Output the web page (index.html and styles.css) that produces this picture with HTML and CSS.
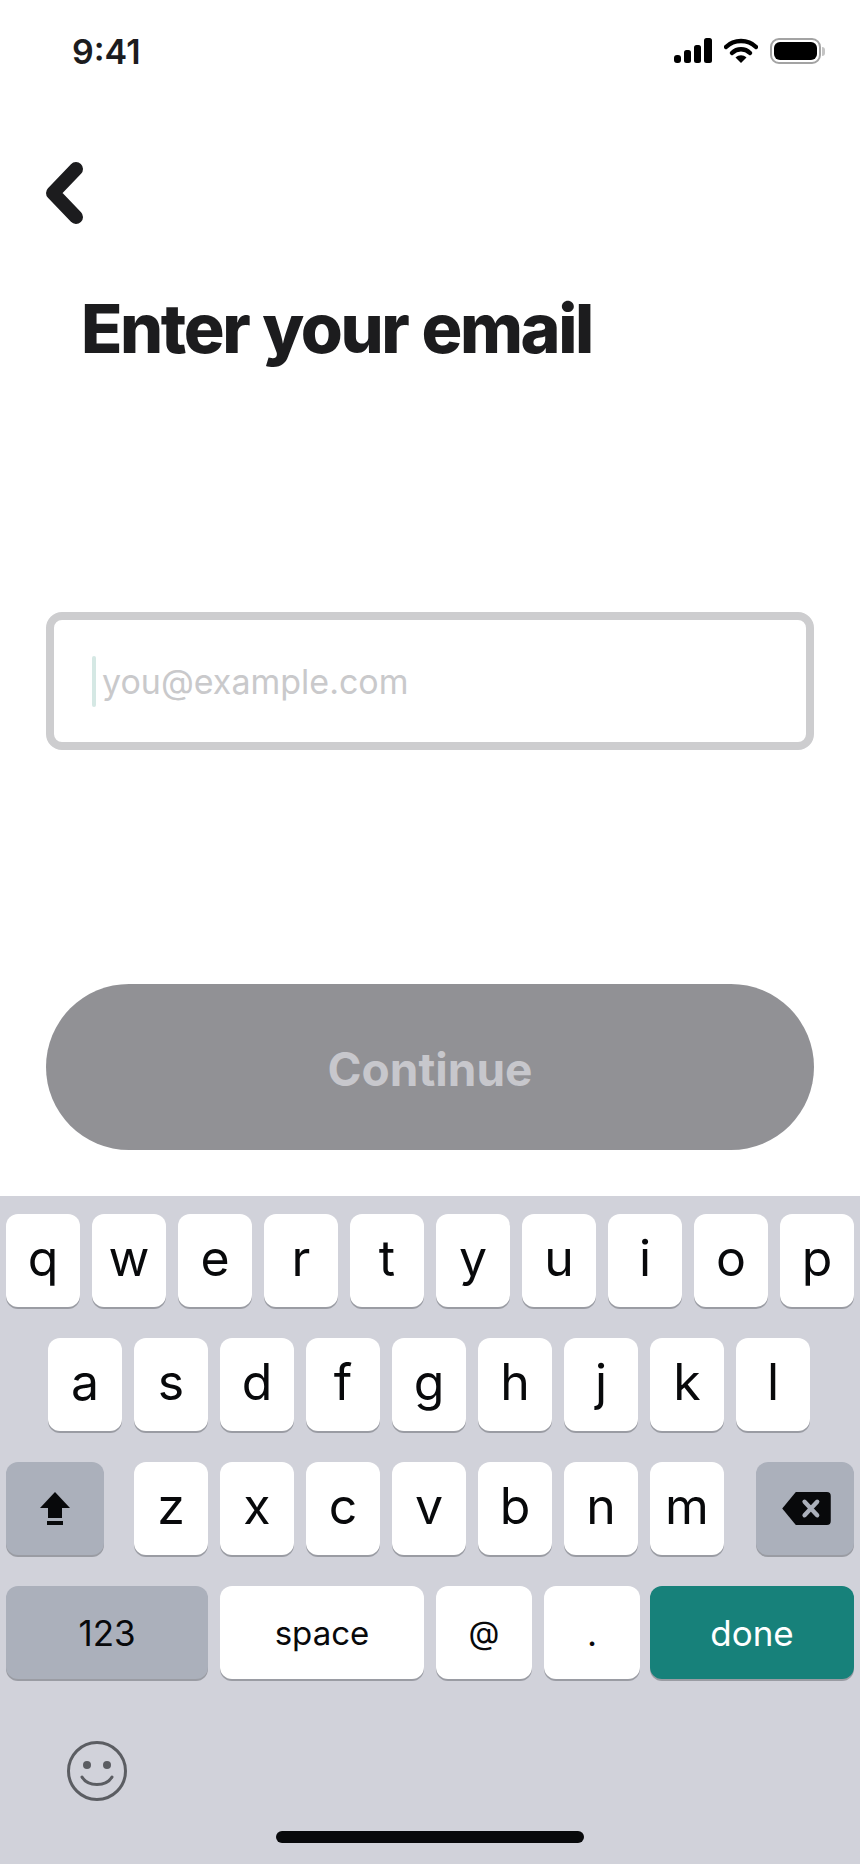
FILE: index.html
```html
<html>
<head>
    <meta charset="UTF-8">
    <meta name="viewport" content="width=device-width, initial-scale=1.0">
    <title>Enter your email</title>
    <link rel="stylesheet" href="styles.css">
</head>
<body>

<div class="screen">
    <div class="status">
        <span class="time">9:41</span>
        <div class="status-icons">
            <svg class="signal" width="38" height="26" viewBox="0 0 38 26">
                <rect x="0" y="17" width="7" height="8" rx="3" />
                <rect x="10" y="12" width="7" height="13" rx="2.5" />
                <rect x="20" y="7" width="7" height="18" rx="2.5" />
                <rect x="30" y="0" width="8" height="25" rx="2.5" />
            </svg>
            <svg class="wifi" width="34" height="26" viewBox="0 0 34 26">
                <path d="M2 9 C10 1 24 1 32 9" fill="none" stroke="#000" stroke-width="4.5" stroke-linecap="round" />
                <path d="M8 15 C13 10 21 10 26 15" fill="none" stroke="#000" stroke-width="4.5" stroke-linecap="round" />
                <path d="M11.5 19.5 C15 16.5 19 16.5 22.5 19.5 L17 25 Z" fill="#000" />
            </svg>
            <div class="battery">
                <div class="battery-body"><div class="battery-fill"></div></div>
                <div class="battery-nub"></div>
            </div>
        </div>
    </div>

    <svg class="back" width="40" height="64" viewBox="0 0 40 64">
        <path d="M30 7 L7 31 L30 55" fill="none" stroke="#1c1c1e" stroke-width="14" stroke-linecap="round" stroke-linejoin="round" />
    </svg>

    <h1 class="title">Enter your email</h1>

    <div class="field">
        <div class="caret"></div>
        <span class="placeholder">you@example.com</span>
    </div>

    <div class="continue">Continue</div>

    <div class="keyboard">
        <div class="row">
            <div class="key">q</div>
            <div class="key">w</div>
            <div class="key">e</div>
            <div class="key">r</div>
            <div class="key">t</div>
            <div class="key">y</div>
            <div class="key">u</div>
            <div class="key">i</div>
            <div class="key">o</div>
            <div class="key">p</div>
        </div>
        <div class="row row-middle">
            <div class="key">a</div>
            <div class="key">s</div>
            <div class="key">d</div>
            <div class="key">f</div>
            <div class="key">g</div>
            <div class="key">h</div>
            <div class="key">j</div>
            <div class="key">k</div>
            <div class="key">l</div>
        </div>
        <div class="row row-letters">
            <div class="key key-side">
                <svg width="30" height="34" viewBox="0 0 30 34">
                    <path d="M15 0 L30 16 L22 16 L22 26 L8 26 L8 16 L0 16 Z" fill="#08090b" />
                    <rect x="7" y="29" width="16" height="4" fill="#08090b" />
                </svg>
            </div>
            <div class="letters">
                <div class="key">z</div>
                <div class="key">x</div>
                <div class="key">c</div>
                <div class="key">v</div>
                <div class="key">b</div>
                <div class="key">n</div>
                <div class="key">m</div>
            </div>
            <div class="key key-side key-delete">
                <svg width="49" height="33" viewBox="0 0 50 34">
                    <path d="M14 0 L46 0 Q50 0 50 4 L50 30 Q50 34 46 34 L14 34 L0 17 Z" fill="#08090b" />
                    <path d="M23 10 L36 24 M36 10 L23 24" stroke="#abb0bb" stroke-width="4.5" stroke-linecap="round" />
                </svg>
            </div>
        </div>
        <div class="row">
            <div class="key key-small key-num">123</div>
            <div class="key key-small key-space">space</div>
            <div class="key key-small key-punct key-at">@</div>
            <div class="key key-small key-punct">.</div>
            <div class="key key-small key-done">done</div>
        </div>

        <svg class="emoji" width="60" height="60" viewBox="0 0 60 60">
            <circle cx="30" cy="30" r="28.5" fill="none" stroke="#5b5d62" stroke-width="3" />
            <circle cx="20" cy="24" r="4" fill="#5b5d62" />
            <circle cx="40" cy="24" r="4" fill="#5b5d62" />
            <path d="M15 36 C21 46 39 46 45 36" fill="none" stroke="#5b5d62" stroke-width="3" stroke-linecap="round" />
        </svg>

        <div class="home-bar"></div>
    </div>
</div>

</body>
</html>
```

FILE: styles.css
```css
* {
    margin: 0;
    padding: 0;
    box-sizing: border-box;
}
body {
    font-family: Inter, "Noto Sans", sans-serif;
    background-color: white;
}
.screen {
    width: 860px;
    height: 1864px;
    overflow: hidden;
    display: flex;
    flex-direction: column;
}

.status {
    height: 64px;
    padding: 38px 35px 0 72px;
    display: flex;
    justify-content: space-between;
    align-items: center;
}
.time {
    font-size: 34px;
    font-weight: 600;
    color: #1c1c1e;
}
.status-icons {
    display: flex;
    align-items: flex-start;
    gap: 12px;
}
.battery {
    display: flex;
    align-items: center;
    gap: 1px;
}
.battery-body {
    width: 51px;
    height: 26px;
    padding: 2px;
    border: 2px solid #a3a3a3;
    border-radius: 9px;
}
.battery-fill {
    height: 100%;
    background-color: black;
    border-radius: 6px;
}
.battery-nub {
    width: 3px;
    height: 9px;
    background-color: #c4c4c4;
    border-radius: 0 3px 3px 0;
}

.back {
    display: block;
    margin: 98px 0 0 46px;
}
.title {
    margin: 62px 0 0 81px;
    font-size: 68px;
    font-weight: 800;
    line-height: 80px;
    letter-spacing: -2.4px;
    word-spacing: 1.5px;
    color: #1c1c1e;
}

.field {
    height: 138px;
    margin: 244px 46px 0;
    padding-left: 38px;
    border: 8px solid #cdcdcf;
    border-radius: 16px;
    display: flex;
    align-items: center;
    gap: 6px;
}
.caret {
    width: 4px;
    height: 51px;
    background-color: #d5e8e4;
    border-radius: 2px;
}
.placeholder {
    font-size: 34px;
    color: #c9c9cb;
}

.continue {
    height: 166px;
    margin: 234px 46px 0;
    padding-top: 4px;
    background-color: #919195;
    border-radius: 83px;
    color: #c7c7cc;
    font-size: 46px;
    font-weight: 700;
    display: flex;
    justify-content: center;
    align-items: center;
}

.keyboard {
    flex: 1;
    margin-top: 46px;
    padding-top: 18px;
    background-color: #d1d2da;
    display: flex;
    flex-direction: column;
}
.row {
    padding: 0 6px;
    margin-bottom: 31px;
    display: flex;
    gap: 12px;
}
.row-middle {
    padding-left: 48px;
}
.row-letters {
    gap: 30px;
}
.letters {
    display: flex;
    gap: 12px;
}
.key {
    width: 74px;
    height: 93px;
    padding-bottom: 5px;
    background-color: white;
    border-radius: 12px;
    box-shadow: 0 2px 0 #9a9ca3;
    color: #08090b;
    font-size: 50px;
    display: flex;
    justify-content: center;
    align-items: center;
}
.key-side {
    width: 98px;
    padding: 0;
    background-color: #abb0bb;
}
.key-delete {
    margin-left: 2px;
    padding-left: 3px;
}
.key-small {
    padding-bottom: 0;
    font-size: 35px;
}
.key-num {
    width: 202px;
    background-color: #abb0bb;
}
.key-space {
    width: 204px;
    font-size: 33px;
}
.key-punct {
    width: 96px;
}
.key-at {
    font-size: 32px;
}
.key-done {
    width: 204px;
    margin-left: -2px;
    background-color: #17817a;
    color: white;
}

.emoji {
    display: block;
    margin: 31px 0 0 67px;
}
.home-bar {
    width: 308px;
    height: 12px;
    margin: 30px auto 0;
    background-color: #08090b;
    border-radius: 6px;
}
```
